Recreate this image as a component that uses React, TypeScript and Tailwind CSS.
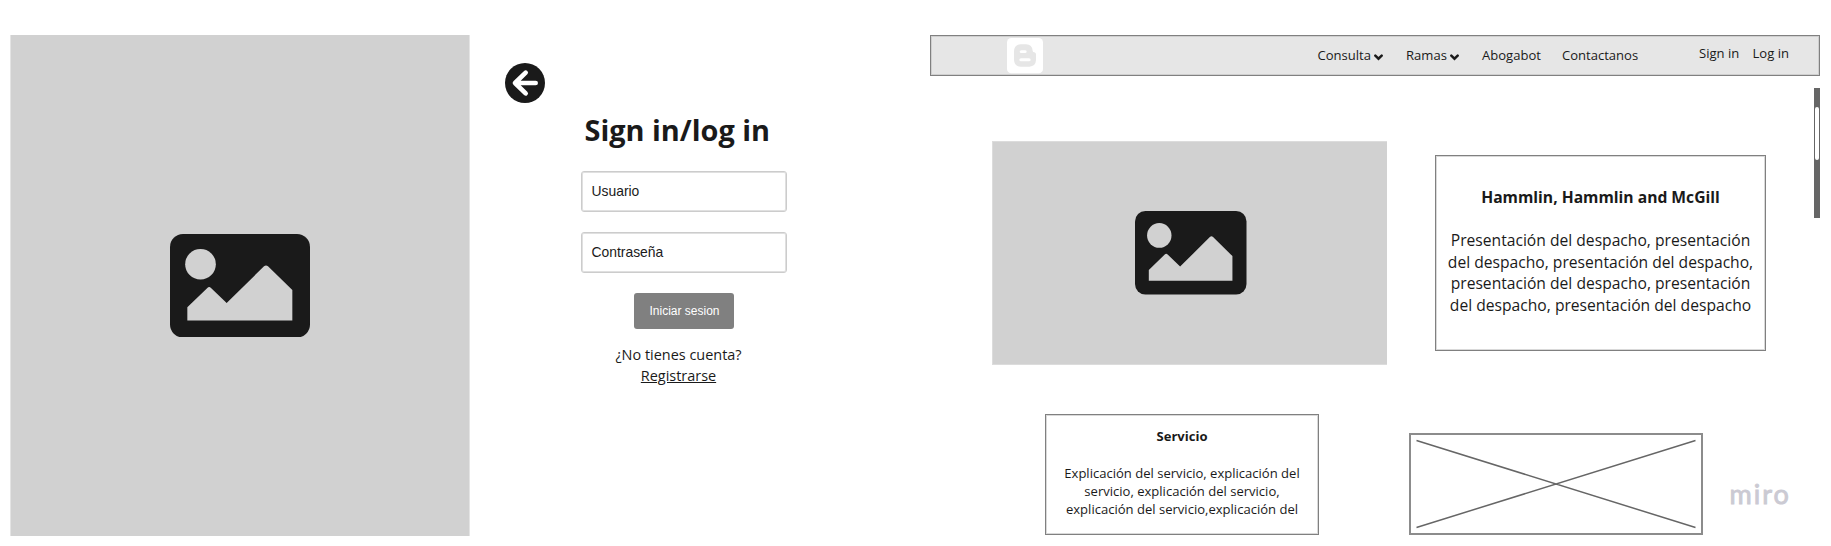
import React from "react";

const SANS = "font-['Open_Sans','Noto_Sans',sans-serif]";
const ARIAL = "font-['Liberation_Sans',Arial,sans-serif]";

function PictureIcon({ className }: { className: string }) {
  return (
    <svg className={className} viewBox="0 0 420 311" preserveAspectRatio="none" aria-hidden="true">
      <rect width="420" height="311" rx="39" fill="#1a1a1a" />
      <circle cx="91.5" cy="91" r="46" fill="#d1d1d1" />
      <path d="M52 220L112 162Q117.500 157 123 162L170 207L282 97Q288 92 294 97L367 168V260H52Z" fill="#d1d1d1" />
    </svg>
  );
}

function BackIcon() {
  return (
    <svg className="size-[40px]" viewBox="0 0 120 120" aria-hidden="true">
      <circle cx="60" cy="60" r="60" fill="#1a1a1a" />
      <path d="M92 60H32M62 29L30 60L62 91" fill="none" stroke="#fff" strokeWidth="14" strokeLinecap="round" strokeLinejoin="round" />
    </svg>
  );
}

function BloggerIcon() {
  return (
    <svg className="h-[36px] w-[36px]" viewBox="0 0 108 108" aria-hidden="true">
      <rect width="108" height="106" rx="13" fill="#fff" />
      <path
        fill="#e6e6e6"
        fillRule="evenodd"
        d="M41 19H57Q76 20 77 38Q77 43 82 43Q87 44 87 49V66Q86 85 67 86H41Q22 85 21 66V39Q22 20 41 19ZM43 37Q38 38 38 41.500Q38 45 43 45H54Q59 45 59 41Q59 37 54 37ZM42 61Q37 61 37 65.500Q37 70 42 70H66Q71 70 71 65.500Q71 61 66 61Z"
      />
    </svg>
  );
}

function Chevron() {
  return (
    <svg className="h-[7px] w-[9px]" viewBox="0 0 27 21" aria-hidden="true">
      <path d="M4 5L13.500 14L23 5" fill="none" stroke="#1a1a1a" strokeWidth="7.500" strokeLinecap="round" strokeLinejoin="miter" />
    </svg>
  );
}

function Field({ label }: { label: string }) {
  return (
    <div className={`${ARIAL} flex h-[41px] w-[206px] items-center rounded-[3px] border border-[#cccccc] pl-[9.500px] text-[13.900px] shadow-[inset_0_0_0_1px_#e0e0e0]`}>
      {label}
    </div>
  );
}

function LoginScreen() {
  return (
    <section className="flex w-[930px] shrink-0 pl-[10px] pt-[35px]">
      <div className="flex h-[501px] w-[460px] shrink-0 items-center justify-center border-x border-[#e4e4e4] bg-[#d1d1d1]">
        <PictureIcon className="h-[103.500px] w-[140px]" />
      </div>
      <div className="ml-[35.300px] pt-[28px]">
        <BackIcon />
      </div>
      <div className="ml-[35.700px] flex w-[206px] flex-col pt-[74px]">
        <h1 className="ml-[3.500px] h-[42px] whitespace-nowrap text-[28.900px] font-bold leading-[42px]">Sign in/log in</h1>
        <div className="mt-[20px] flex flex-col gap-[20px]">
          <Field label="Usuario" />
          <Field label="Contraseña" />
        </div>
        <button className={`${ARIAL} ml-[53px] mt-[20px] h-[36px] w-[100px] rounded-[3px] bg-[#808080] pl-px text-[12px] text-white`}>
          Iniciar sesion
        </button>
        <div className="ml-[-5.500px] mt-[14.500px] w-[206px] text-center text-[14.450px] leading-[21px]">
          ¿No tienes cuenta?
          <br />
          <a className="underline underline-offset-1">Registrarse</a>
        </div>
      </div>
    </section>
  );
}

function HomeScreen() {
  return (
    <section className="w-[890px] shrink-0 pt-[35px]">
      <header className="flex h-[41px] w-[890px] items-center whitespace-nowrap border border-[#808080] bg-[#e6e6e6] text-[13.050px] leading-[18px] shadow-[inset_0_0_0_1px_#cfcfcf]">
        <div className="ml-[76px] w-[310.500px] shrink-0">
          <BloggerIcon />
        </div>
        <nav className="flex w-[381.500px] shrink-0 items-center pb-[2px]">
          <span className="flex w-[88.500px] shrink-0 items-center gap-[3px]">
            Consulta
            <span className="pt-[5px]"><Chevron /></span>
          </span>
          <span className="flex w-[76px] shrink-0 items-center gap-[3px]">
            Ramas
            <span className="pt-[5px]"><Chevron /></span>
          </span>
          <span className="w-[80px] shrink-0">Abogabot</span>
          <span>Contactanos</span>
        </nav>
        <div className="flex pb-[5px]">
          <span className="w-[53.500px]">Sign in</span>
          <span>Log in</span>
        </div>
      </header>

      <div className="flex h-[338px]">
        <div className="ml-[62px] mt-[65px] flex h-[224px] w-[395px] shrink-0 items-center justify-center border-y border-l border-[#dcdcdc] bg-[#d1d1d1] pl-[2px]">
          <PictureIcon className="h-[83.500px] w-[111.500px]" />
        </div>
        <article className="ml-[48px] mt-[79px] h-[196px] w-[331px] shrink-0 whitespace-nowrap border border-[#808080] pt-[30.600px] text-center text-[15.650px] leading-[21.700px] shadow-[inset_0_0_0_1px_#d9d9d9]">
          <h2 className="font-bold">Hammlin, Hammlin and McGill</h2>
          <p className="mt-[21.700px]">
            Presentación del despacho, presentación
            <br />
            del despacho, presentación del despacho,
            <br />
            presentación del despacho, presentación
            <br />
            del despacho, presentación del despacho
          </p>
        </article>
        <div className="ml-[48px] mt-[12px] h-[130px] w-[6px] shrink-0 bg-[#666666] px-px pt-[19px]">
          <div className="h-[53px] rounded-full bg-white" />
        </div>
      </div>

      <div className="flex">
        <article className="ml-[115px] h-[121px] w-[274px] shrink-0 whitespace-nowrap border border-[#808080] pt-[12px] text-center text-[13.050px] leading-[18.100px] shadow-[inset_0_0_0_1px_#d9d9d9]">
          <h3 className="font-bold">Servicio</h3>
          <p className="mt-[18.500px]">
            Explicación del servicio, explicación del
            <br />
            servicio, explicación del servicio,
            <br />
            explicación del servicio,explicación del
          </p>
        </article>
        <div className="ml-[90px] mt-[19px] h-[102px] w-[294px] shrink-0 border-2 border-[#8c8c8c]">
          <svg className="size-full" viewBox="0 0 290 98" aria-hidden="true">
            <path d="M5.500 5.500L284.500 92.500M284.500 5.500L5.500 92.500" stroke="#666666" strokeWidth="1.500" />
          </svg>
        </div>
        <span className="ml-[26.500px] mt-[62px] font-['Lato'] text-[27px] font-normal leading-[36px] tracking-[2px] text-[#cbcad3] [-webkit-text-stroke:0.900px_#cbcad3]">
          miro
        </span>
      </div>
    </section>
  );
}

export default function App() {
  return (
    <main className={`${SANS} flex h-[546px] w-[1831px] overflow-hidden bg-white text-[#1a1a1a]`}>
      <LoginScreen />
      <HomeScreen />
    </main>
  );
}
